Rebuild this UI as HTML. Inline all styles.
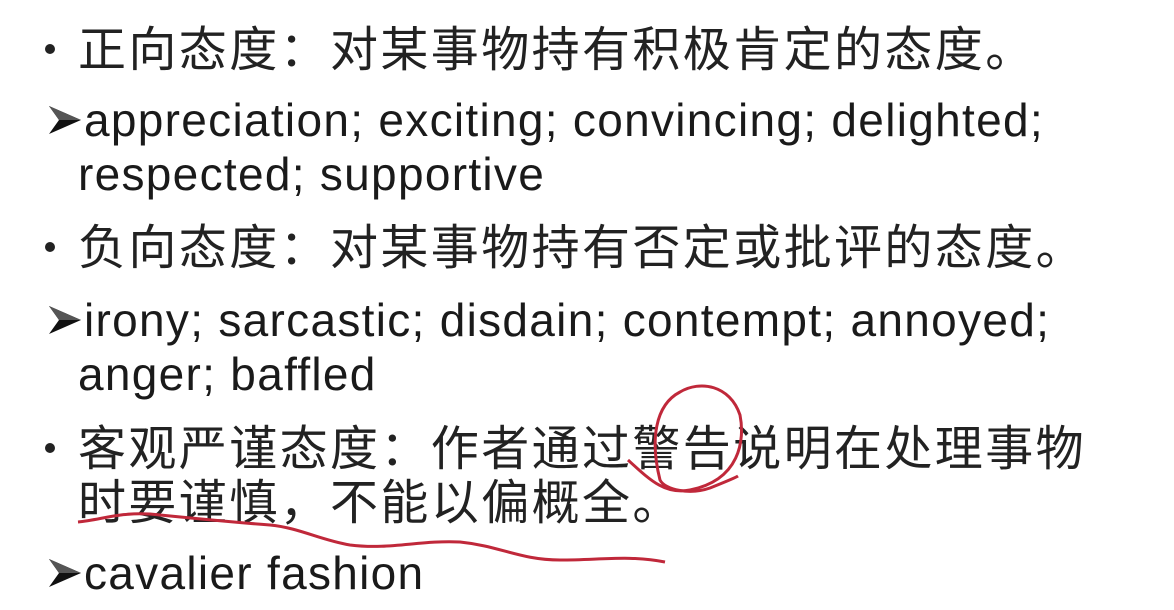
<!DOCTYPE html>
<html><head><meta charset="utf-8"><style>
body{margin:0;width:1174px;height:610px;background:#fff;overflow:hidden;position:relative;font-family:"Liberation Sans","Noto Sans CJK SC",sans-serif;color:#1a1a1a}
.l{position:absolute;white-space:nowrap;line-height:1}
.c{font-size:48px;letter-spacing:2.4px;font-family:"Noto Sans CJK SC",sans-serif;font-weight:400;color:#222}
.e{font-size:46px;letter-spacing:1.3px}
.b{position:absolute;width:10px;height:10px;border-radius:50%;background:#222}
.a{position:absolute;width:34px;height:30px}
</style></head><body>
<div class="b" style="left:45px;top:44px"></div>
<div class="l c" style="left:78px;top:21px">正向态度：对某事物持有积极肯定的态度。</div>
<svg class="a" style="left:48px;top:105px" viewBox="0 0 34 30"><path d="M1,1 L33,15 L1,29 L11,15 Z" fill="#111"/><path d="M1,1 L33,15 L11,15 Z" fill="#555"/></svg>
<div class="l e" style="left:84px;top:97px">appreciation; exciting; convincing; delighted;</div>
<div class="l e" style="left:78px;top:151px">respected; supportive</div>
<div class="b" style="left:45px;top:242px"></div>
<div class="l c" style="left:78px;top:219px">负向态度：对某事物持有否定或批评的态度。</div>
<svg class="a" style="left:48px;top:305px" viewBox="0 0 34 30"><path d="M1,1 L33,15 L1,29 L11,15 Z" fill="#111"/><path d="M1,1 L33,15 L11,15 Z" fill="#555"/></svg>
<div class="l e" style="left:84px;top:297px">irony; sarcastic; disdain; contempt; annoyed;</div>
<div class="l e" style="left:78px;top:351px">anger; baffled</div>
<div class="b" style="left:45px;top:443px"></div>
<div class="l c" style="left:78px;top:420px">客观严谨态度：作者通过警告说明在处理事物</div>
<div class="l c" style="left:78px;top:474px">时要谨慎，不能以偏概全。</div>
<svg class="a" style="left:48px;top:558px" viewBox="0 0 34 30"><path d="M1,1 L33,15 L1,29 L11,15 Z" fill="#111"/><path d="M1,1 L33,15 L11,15 Z" fill="#555"/></svg>
<div class="l e" style="left:84px;top:550px">cavalier fashion</div>
<svg width="1174" height="610" style="position:absolute;left:0;top:0">
<path d="M628,460 C650,480 665,495 690,490 C740,480 745,440 740,415 C730,385 700,380 680,392 C655,405 650,440 660,480 C665,490 690,495 710,488 C725,482 735,478 738,476" fill="none" stroke="#c0283a" stroke-width="3"/>
<path d="M78,522 C100,520 120,512 150,514 C190,518 230,522 270,525 C300,528 320,540 350,545 C390,550 420,540 460,542 C500,546 520,560 560,560 C600,560 630,555 665,562" fill="none" stroke="#c0283a" stroke-width="3"/>
</svg>
</body></html>
